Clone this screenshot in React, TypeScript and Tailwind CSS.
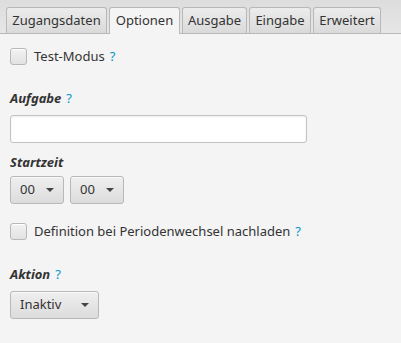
import React from "react";

const Help = () => <span className="text-[#0096c9] ml-[5px] font-normal not-italic">?</span>;

const Checkbox = () => (
  <div className="w-[17px] h-[17px] rounded-[3px] border border-[#b8b8b8] bg-gradient-to-b from-[#f2f2f2] to-[#e2e2e2] shadow-[inset_0_1px_0_#fff]" />
);

const Select = ({ label, w }: { label: string; w: string }) => (
  <div
    className={`${w} h-[28px] rounded-[3px] border border-[#b8b8b8] bg-gradient-to-b from-[#efefef] to-[#dcdcdc] shadow-[inset_0_1px_0_#fafafa] flex items-center justify-between pl-[9px] pr-[9px] text-[13px] text-[#333]`}
  >
    <span>{label}</span>
    <svg width="8" height="4" viewBox="0 0 8 4">
      <path d="M0 0 H8 L4 4 Z" fill="#444" />
    </svg>
  </div>
);

const Tab = ({ label, w, selected }: { label: string; w: string; selected?: boolean }) => (
  <div
    className={
      selected
        ? `${w} h-[27px] -mb-px flex items-center justify-center rounded-t-[3px] border border-b-0 border-[#b8b8b8] bg-[#f4f4f4] text-[13px] text-[#333] whitespace-nowrap`
        : `${w} h-[26px] flex items-center justify-center rounded-t-[3px] border border-b-0 border-[#b8b8b8] bg-gradient-to-b from-[#ececec] to-[#dadada] text-[13px] text-[#333] whitespace-nowrap`
    }
  >
    {label}
  </div>
);

export default function App() {
  return (
    <div
      className="w-[401px] h-[343px] bg-[#f4f4f4] text-[#333] overflow-hidden"
      style={{ fontFamily: '"Noto Sans", "Open Sans", sans-serif' }}
    >
      <div className="h-[34px] bg-gradient-to-b from-[#dddddd] to-[#e6e6e6] border-b border-[#b8b8b8] flex items-end pl-[6px] gap-[2px]">
        <Tab label="Zugangsdaten" w="w-[101px]" />
        <Tab label="Optionen" w="w-[71px]" selected />
        <Tab label="Ausgabe" w="w-[65px]" />
        <Tab label="Eingabe" w="w-[62px]" />
        <Tab label="Erweitert" w="w-[68px]" />
      </div>
      <div className="pl-[10px] pt-[14px] flex flex-col">
        <div className="flex items-center gap-[7px] h-[17px] text-[13px]">
          <Checkbox />
          <span>
            Test-Modus
            <Help />
          </span>
        </div>
        <div className="mt-[24px] text-[13px] font-bold italic leading-[18px]">
          Aufgabe
          <Help />
        </div>
        <div className="mt-[8px] w-[297px] h-[28px] rounded-[3px] border border-[#c2c2c2] bg-white shadow-[inset_0_1px_2px_rgba(0,0,0,0.08)]" />
        <div className="mt-[10px] text-[13px] font-bold italic leading-[18px]">Startzeit</div>
        <div className="mt-[5px] flex gap-[6px]">
          <Select label="00" w="w-[54px]" />
          <Select label="00" w="w-[54px]" />
        </div>
        <div className="mt-[19px] flex items-center gap-[7px] h-[17px] text-[13px]">
          <Checkbox />
          <span>
            Definition bei Periodenwechsel nachladen
            <Help />
          </span>
        </div>
        <div className="mt-[25px] text-[13px] font-bold italic leading-[18px]">
          Aktion
          <Help />
        </div>
        <div className="mt-[8px]">
          <Select label="Inaktiv" w="w-[89px]" />
        </div>
      </div>
    </div>
  );
}
